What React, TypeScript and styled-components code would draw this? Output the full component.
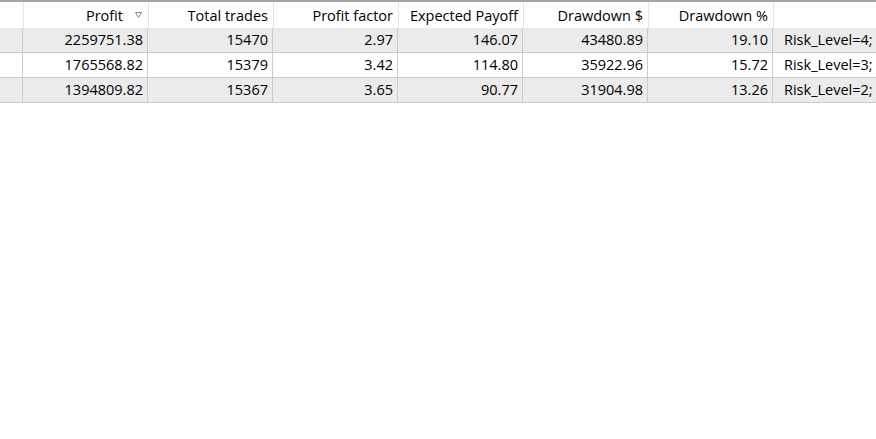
import React from "react";
import styled, { createGlobalStyle } from "styled-components";

const GlobalStyle = createGlobalStyle`
  html, body {
    margin: 0;
    padding: 0;
    background: #ffffff;
  }
  body {
    font-family: "Open Sans", "Noto Sans", "Liberation Sans", sans-serif;
    color: #000000;
  }
`;

const Table = styled.div`
  display: flex;
  flex-direction: column;
  width: 876px;
  font-size: 14.5px;
  line-height: 1;
`;

const HeaderRow = styled.div`
  display: grid;
  grid-template-columns: 24px repeat(6, 125px) 1fr;
  height: 26px;
  border-top: 2px solid #a3a3a3;
  background: #ffffff;
`;

const HeaderCell = styled.div<{ $last?: boolean }>`
  display: flex;
  align-items: center;
  justify-content: flex-end;
  gap: 12px;
  padding: 3px 5px 0 0;
  border-right: ${(p) => (p.$last ? "none" : "1px solid #e4e4e4")};
  white-space: nowrap;
  overflow: hidden;
`;

const SortMark = styled.svg`
  width: 7px;
  height: 6px;
  flex: none;
  margin-right: 1px;
  margin-top: -3px;
`;

const DataRow = styled.div<{ $shaded: boolean }>`
  display: grid;
  grid-template-columns: 23px repeat(6, 125px) 1fr;
  height: 24px;
  border-bottom: 1px solid #cccccc;
  background: ${(p) => (p.$shaded ? "#ebebeb" : "#ffffff")};
`;

const DataCell = styled.div<{ $left?: boolean; $last?: boolean }>`
  display: flex;
  align-items: center;
  justify-content: ${(p) => (p.$left ? "flex-start" : "flex-end")};
  padding: ${(p) => (p.$left ? "1px 0 0 11px" : "1px 4px 0 0")};
  border-right: ${(p) => (p.$last ? "none" : "1px solid #cccccc")};
  white-space: nowrap;
  overflow: hidden;
`;

const headers = [
  "Profit",
  "Total trades",
  "Profit factor",
  "Expected Payoff",
  "Drawdown $",
  "Drawdown %",
];

const rows = [
  ["2259751.38", "15470", "2.97", "146.07", "43480.89", "19.10", "Risk_Level=4;"],
  ["1765568.82", "15379", "3.42", "114.80", "35922.96", "15.72", "Risk_Level=3;"],
  ["1394809.82", "15367", "3.65", "90.77", "31904.98", "13.26", "Risk_Level=2;"],
];

export default function App() {
  return (
    <>
      <GlobalStyle />
      <Table>
        <HeaderRow>
          <HeaderCell />
          {headers.map((h, i) => (
            <HeaderCell key={h}>
              <span>{h}</span>
              {i === 0 && (
                <SortMark viewBox="0 0 7 6">
                  <path
                    d="M0.5 0.5 H6.5 L3.5 5.5 Z"
                    fill="none"
                    stroke="#8a8a8a"
                    strokeWidth="1"
                  />
                </SortMark>
              )}
            </HeaderCell>
          ))}
          <HeaderCell $last />
        </HeaderRow>
        {rows.map((r, ri) => (
          <DataRow key={ri} $shaded={ri % 2 === 0}>
            <DataCell />
            {r.map((v, ci) => (
              <DataCell key={ci} $left={ci === 6} $last={ci === 6}>
                {v}
              </DataCell>
            ))}
          </DataRow>
        ))}
      </Table>
    </>
  );
}
